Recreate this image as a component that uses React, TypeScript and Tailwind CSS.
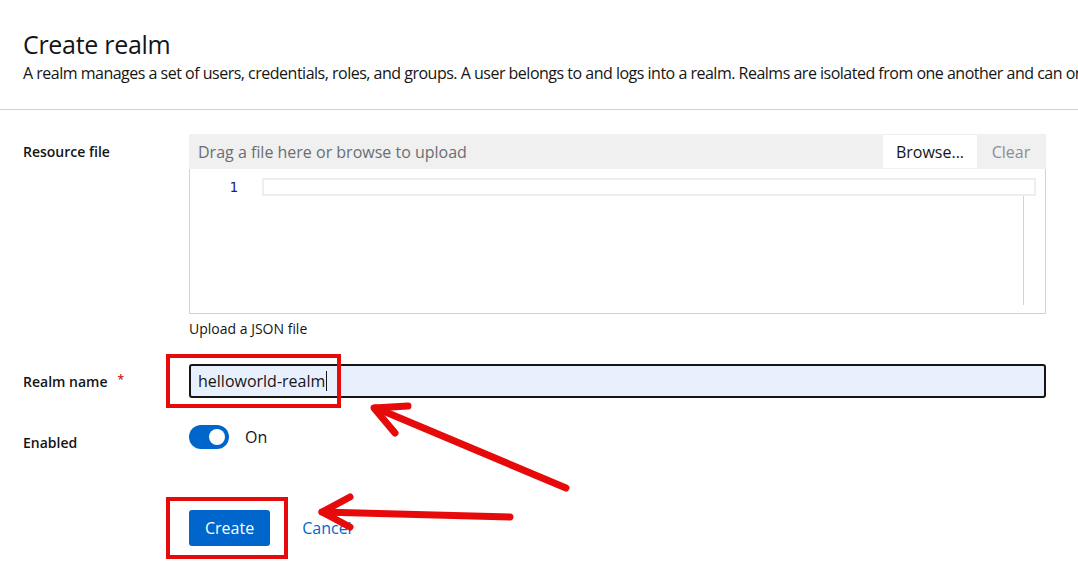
import React from 'react';

const font = { fontFamily: '"Open Sans", "Liberation Sans", sans-serif' };

function Annotations() {
  // red marker boxes and arrows drawn over the screenshot
  return (
    <svg className="absolute inset-0 pointer-events-none" width="1078" height="571" viewBox="0 0 1078 571">
      <rect x="168" y="356" width="171" height="50" fill="none" stroke="#e60a0a" strokeWidth="4" />
      <rect x="168" y="499" width="118" height="58" fill="none" stroke="#e60a0a" strokeWidth="4" />
      <g stroke="#e60a0a" strokeWidth="7" strokeLinecap="round" strokeLinejoin="round" fill="none">
        <path d="M566 488 L376 408" />
        <path d="M408 406 L374 408 L395 433" />
        <path d="M510 517 L322 512" />
        <path d="M350 497 L322 512 L350 527" />
      </g>
    </svg>
  );
}

export default function App() {
  return (
    <div className="relative w-[1078px] h-[571px] overflow-hidden bg-white text-[#151515]" style={font}>
      {/* Header */}
      <div className="pl-[23px] pt-[28px] pb-[25px] border-b border-[#d2d2d2] whitespace-nowrap">
        <h1 className="text-[25px] leading-[32px] font-normal tracking-[-0.3px]">Create realm</h1>
        <p className="text-[16px] leading-[22px] mt-[2px] tracking-[-0.5px]">
          A realm manages a set of users, credentials, roles, and groups. A user belongs to and logs into a realm. Realms are isolated from one another and can only manage and authenticate the users that they control.
        </p>
      </div>

      {/* Form */}
      <div className="pl-[23px] pr-[32px] pt-[24px]">
        <div className="grid grid-cols-[166px_1fr]">
          <div className="text-[14px] font-semibold pt-[7px]">Resource file</div>
          <div>
            <div className="flex h-[35px] bg-[#f0f0f0] border border-[#f0f0f0]">
              <div className="flex-1 flex items-center pl-[8px] text-[16px] text-[#6a6e73]">
                Drag a file here or browse to upload
              </div>
              <div className="w-[94px] flex items-center justify-center bg-white text-[16px]">Browse...</div>
              <div className="w-[68px] flex items-center justify-center text-[16px] text-[#8a8d90]">Clear</div>
            </div>
            <div className="h-[145px] border border-t-0 border-[#d2d2d2] flex pt-[9px]">
              <div
                className="w-[52px] text-right pr-[4px] text-[14px] leading-[18px] text-[#1c1c8c]"
                style={{ fontFamily: '"DejaVu Sans Mono", "Liberation Mono", monospace' }}
              >
                1
              </div>
              <div className="flex-1 pl-[20px] pr-[9px] flex flex-col">
                <div className="h-[18px] border-2 border-[#eeeeee]" />
                <div className="flex-1 flex justify-end pr-[12px] pb-[8px]">
                  <div className="w-px bg-[#d2d2d2]" />
                </div>
              </div>
            </div>
            <div className="text-[14px] leading-[20px] mt-[5px]">Upload a JSON file</div>
          </div>

          <div className="text-[14px] font-semibold pt-[32px] flex">
            Realm name <span className="text-[#c9190b] ml-[10px] text-[12px]">*</span>
          </div>
          <div className="pt-[25px]">
            <div className="h-[34px] rounded-[3px] border-2 border-[#151515] bg-[#e8f0fe] flex items-center pl-[7px] text-[16px]">
              helloworld-realm
              <span className="inline-block w-px h-[20px] bg-[#151515] ml-[1px]" />
            </div>
          </div>

          <div className="text-[14px] font-semibold pt-[34px]">Enabled</div>
          <div className="pt-[23px] flex items-center">
            <div className="w-[40px] h-[24px] rounded-full bg-[#0066cc] flex items-center justify-end pr-[4px]">
              <div className="w-[16px] h-[16px] rounded-full bg-white" />
            </div>
            <span className="ml-[16px] text-[16px] text-[#151515]">On</span>
          </div>

          <div />
          <div className="pt-[57px] flex items-center">
            <button className="h-[36px] px-[16px] rounded-[3px] bg-[#0066cc] text-white text-[16px]">Create</button>
            <button className="ml-[16px] px-[16px] text-[16px] text-[#0066cc]">Cancel</button>
          </div>
        </div>
      </div>

      <Annotations />
    </div>
  );
}
